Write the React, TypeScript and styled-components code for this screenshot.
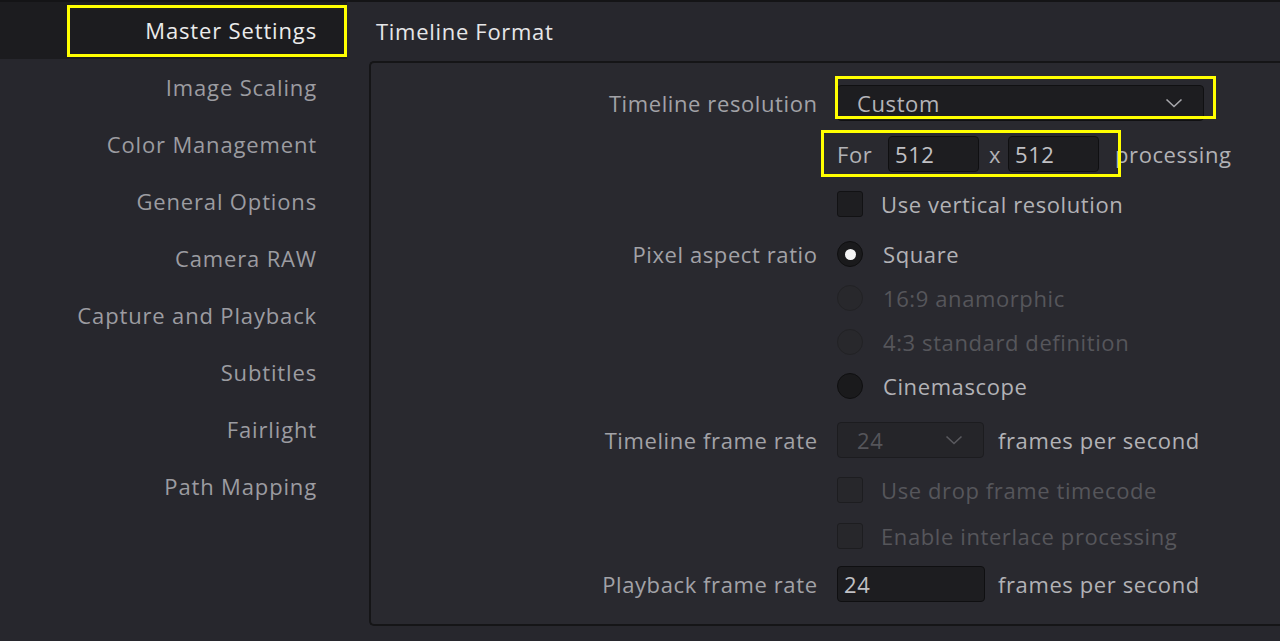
import React from "react";
import styled, { createGlobalStyle } from "styled-components";

const Global = createGlobalStyle`
  html, body { margin: 0; padding: 0; background: #27272d; }
  body { font-family: "Open Sans", "Noto Sans", sans-serif; }
  #root { width: 1280px; height: 641px; overflow: hidden; }
`;

const Page = styled.div`
  display: flex;
  width: 1280px;
  height: 641px;
  background: #27272d;
  border-top: 2px solid #141416;
  box-sizing: border-box;
  font-size: 22px;
  letter-spacing: 0.6px;
  -webkit-font-smoothing: antialiased;
`;

const Sidebar = styled.nav`
  width: 347px;
  flex: none;
  display: flex;
  flex-direction: column;
  letter-spacing: 0.85px;
`;

const NavItem = styled.div<{ $active?: boolean }>`
  position: relative;
  height: 57px;
  box-sizing: border-box;
  display: flex;
  align-items: center;
  justify-content: flex-end;
  padding: 0 30px 2px 0;
  background: ${(p) => (p.$active ? "#1c1c1f" : "transparent")};
  color: ${(p) => (p.$active ? "#ebebeb" : "#9c9ca1")};
  white-space: nowrap;
`;

const Highlight = styled.div<{ $l: number; $r: number; $t: number; $b: number }>`
  position: absolute;
  left: ${(p) => p.$l}px;
  right: ${(p) => p.$r}px;
  top: ${(p) => p.$t}px;
  bottom: ${(p) => p.$b}px;
  border: 3px solid #ffff00;
  pointer-events: none;
`;

const Main = styled.main`
  flex: 1;
  display: flex;
  flex-direction: column;
  padding-left: 22px;
`;

const Header = styled.div`
  height: 59px;
  display: flex;
  align-items: center;
  padding: 0 0 2px 7px;
  box-sizing: border-box;
  color: #e6e6e8;
  letter-spacing: 0.7px;
`;

const Panel = styled.section`
  height: 565px;
  box-sizing: border-box;
  border: 2px solid #151517;
  border-right: none;
  border-radius: 5px 0 0 5px;
  background: #29292f;
  padding-top: 18px;
  display: flex;
  flex-direction: column;
`;

const Row = styled.div<{ $mt?: number }>`
  height: 44px;
  margin-top: ${(p) => p.$mt ?? 0}px;
  display: grid;
  grid-template-columns: 446px auto;
  column-gap: 20px;
  align-items: center;
`;

const Label = styled.div`
  text-align: right;
  color: #a2a2a7;
  white-space: nowrap;
  margin-right: -0.6px;
`;

const Controls = styled.div`
  display: flex;
  align-items: center;
  white-space: nowrap;
`;

const Text = styled.span<{ $disabled?: boolean; $ml?: number }>`
  color: ${(p) => (p.$disabled ? "#56565b" : "#b2b2b6")};
  margin-left: ${(p) => p.$ml ?? 0}px;
`;

const Anchor = styled.div`
  position: relative;
  display: flex;
  align-items: center;
`;

const Select = styled.div<{ $w: number; $disabled?: boolean }>`
  width: ${(p) => p.$w}px;
  height: 36px;
  box-sizing: border-box;
  display: flex;
  align-items: center;
  justify-content: space-between;
  padding: 0 20px 0 19px;
  border-radius: 4px;
  background: ${(p) => (p.$disabled ? "#252529" : "#1d1d20")};
  border: 1px solid ${(p) => (p.$disabled ? "#1c1c1f" : "#101012")};
  color: ${(p) => (p.$disabled ? "#55555a" : "#b4b4b8")};
`;

const Input = styled.div<{ $w: number }>`
  width: ${(p) => p.$w}px;
  height: 36px;
  box-sizing: border-box;
  display: flex;
  align-items: center;
  padding-left: 6px;
  border-radius: 4px;
  background: #1d1d20;
  border: 1px solid #0f0f11;
  color: #c0c0c4;
`;

const ForGroup = styled.div`
  display: flex;
  align-items: center;
  height: 44px;
`;

const ForText = styled.span`
  color: #b2b2b6;
  width: 51px;
`;

const Times = styled.span`
  color: #b2b2b6;
  width: 29px;
  padding-left: 10px;
  box-sizing: border-box;
`;

const Check = styled.div<{ $disabled?: boolean }>`
  width: 26px;
  height: 26px;
  box-sizing: border-box;
  border-radius: 3px;
  background: ${(p) => (p.$disabled ? "#27272b" : "#1e1e21")};
  border: 1px solid ${(p) => (p.$disabled ? "#1d1d20" : "#121214")};
  margin-right: 18px;
`;

const Radio = styled.div<{ $checked?: boolean; $disabled?: boolean }>`
  width: 26px;
  height: 26px;
  box-sizing: border-box;
  border-radius: 50%;
  background: ${(p) => (p.$disabled ? "#28282c" : "#1a1a1c")};
  border: 1px solid ${(p) => (p.$disabled ? "#222225" : "#0f0f10")};
  margin-right: 20px;
  display: flex;
  align-items: center;
  justify-content: center;
  &::after {
    content: "";
    display: ${(p) => (p.$checked ? "block" : "none")};
    width: 11px;
    height: 11px;
    border-radius: 50%;
    background: #f4f4f4;
  }
`;

const Chevron = ({ color }: { color: string }) => (
  <svg width="18" height="10" viewBox="0 0 18 10">
    <path d="M1.5 1.5 L9 8.5 L16.5 1.5" fill="none" stroke={color} strokeWidth="1.6" />
  </svg>
);

const navItems = [
  "Image Scaling",
  "Color Management",
  "General Options",
  "Camera RAW",
  "Capture and Playback",
  "Subtitles",
  "Fairlight",
  "Path Mapping",
];

export default function App() {
  return (
    <>
      <Global />
      <Page>
        <Sidebar>
          <NavItem $active>
            Master Settings
            <Highlight $l={67} $r={0} $t={3} $b={2} />
          </NavItem>
          {navItems.map((n) => (
            <NavItem key={n}>{n}</NavItem>
          ))}
        </Sidebar>
        <Main>
          <Header>Timeline Format</Header>
          <Panel>
            <Row>
              <Label>Timeline resolution</Label>
              <Controls>
                <Anchor>
                  <Select $w={367}>
                    <span>Custom</span>
                    <Chevron color="#a8a8ac" />
                  </Select>
                  <Highlight $l={-2} $r={-12} $t={-9} $b={2} />
                </Anchor>
              </Controls>
            </Row>
            <Row $mt={7}>
              <Label />
              <Controls>
                <Anchor>
                  <ForGroup>
                    <ForText>For</ForText>
                    <Input $w={91}>512</Input>
                    <Times>x</Times>
                    <Input $w={91}>512</Input>
                  </ForGroup>
                  <Highlight $l={-16} $r={-22} $t={-2} $b={-1} />
                </Anchor>
                <Text $ml={16}>processing</Text>
              </Controls>
            </Row>
            <Row $mt={6}>
              <Label />
              <Controls>
                <Check />
                <Text>Use vertical resolution</Text>
              </Controls>
            </Row>
            <Row $mt={6}>
              <Label>Pixel aspect ratio</Label>
              <Controls>
                <Radio $checked />
                <Text>Square</Text>
              </Controls>
            </Row>
            <Row>
              <Label />
              <Controls>
                <Radio $disabled />
                <Text $disabled>16:9 anamorphic</Text>
              </Controls>
            </Row>
            <Row>
              <Label />
              <Controls>
                <Radio $disabled />
                <Text $disabled>4:3 standard definition</Text>
              </Controls>
            </Row>
            <Row>
              <Label />
              <Controls>
                <Radio />
                <Text>Cinemascope</Text>
              </Controls>
            </Row>
            <Row $mt={10}>
              <Label>Timeline frame rate</Label>
              <Controls>
                <Select $w={147} $disabled>
                  <span>24</span>
                  <Chevron color="#5a5a5f" />
                </Select>
                <Text $ml={14}>frames per second</Text>
              </Controls>
            </Row>
            <Row $mt={6}>
              <Label />
              <Controls>
                <Check $disabled />
                <Text $disabled>Use drop frame timecode</Text>
              </Controls>
            </Row>
            <Row $mt={2}>
              <Label />
              <Controls>
                <Check $disabled />
                <Text $disabled>Enable interlace processing</Text>
              </Controls>
            </Row>
            <Row $mt={4}>
              <Label>Playback frame rate</Label>
              <Controls>
                <Input $w={148}>24</Input>
                <Text $ml={13}>frames per second</Text>
              </Controls>
            </Row>
          </Panel>
        </Main>
      </Page>
    </>
  );
}
